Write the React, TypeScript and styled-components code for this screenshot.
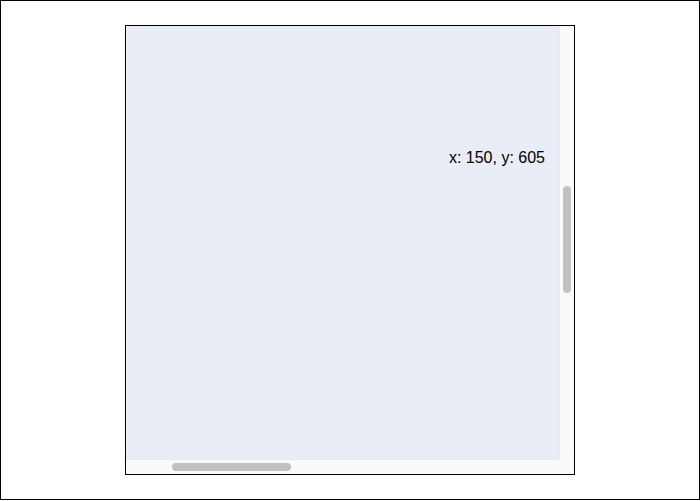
import React from 'react';
import styled, { createGlobalStyle } from 'styled-components';

const GlobalStyle = createGlobalStyle`
  html, body { margin: 0; padding: 0; background: #ffffff; }
  body { font-family: "Liberation Sans", Arial, sans-serif; }
  * { box-sizing: border-box; }
`;

const Page = styled.div`
  width: 700px;
  height: 500px;
  border: 1px solid #000000;
  display: flex;
  align-items: center;
  justify-content: center;
`;

const Frame = styled.div`
  position: relative;
  width: 450px;
  height: 450px;
  border: 1px solid #000000;
  display: grid;
  grid-template-columns: 1fr 15px;
  grid-template-rows: 1fr 15px;
  background: #fafafa;
`;

const Viewport = styled.div`
  background: #e9edf5;
  overflow: hidden;
`;

const Track = styled.div<{ $vertical?: boolean }>`
  position: relative;
  background: #fafafa;
  ${(p) =>
    p.$vertical
      ? 'border-left: 1px solid #e8e8e8;'
      : 'border-top: 1px solid #e8e8e8;'}
`;

const Corner = styled.div`
  background: #fafafa;
`;

const Thumb = styled.div<{ $vertical?: boolean }>`
  position: absolute;
  background: #c1c1c1;
  border-radius: 4px;
  ${(p) => (p.$vertical ? 'left: 3px; width: 8px;' : 'top: 3px; height: 8px;')}
`;

const Coords = styled.div`
  position: absolute;
  top: 123px;
  right: 29px;
  font-size: 16px;
  color: #000000;
  white-space: nowrap;
`;

const App = () => {
  const pos = { x: 150, y: 605 };
  const vThumb = { offset: 160, length: 107 };
  const hThumb = { offset: 46, length: 119 };

  return (
    <>
      <GlobalStyle />
      <Page>
        <Frame>
          <Viewport />
          <Track $vertical>
            <Thumb $vertical style={{ top: vThumb.offset, height: vThumb.length }} />
          </Track>
          <Track>
            <Thumb style={{ left: hThumb.offset, width: hThumb.length }} />
          </Track>
          <Corner />
          <Coords>
            x: {pos.x}, y: {pos.y}
          </Coords>
        </Frame>
      </Page>
    </>
  );
};

export default App;
